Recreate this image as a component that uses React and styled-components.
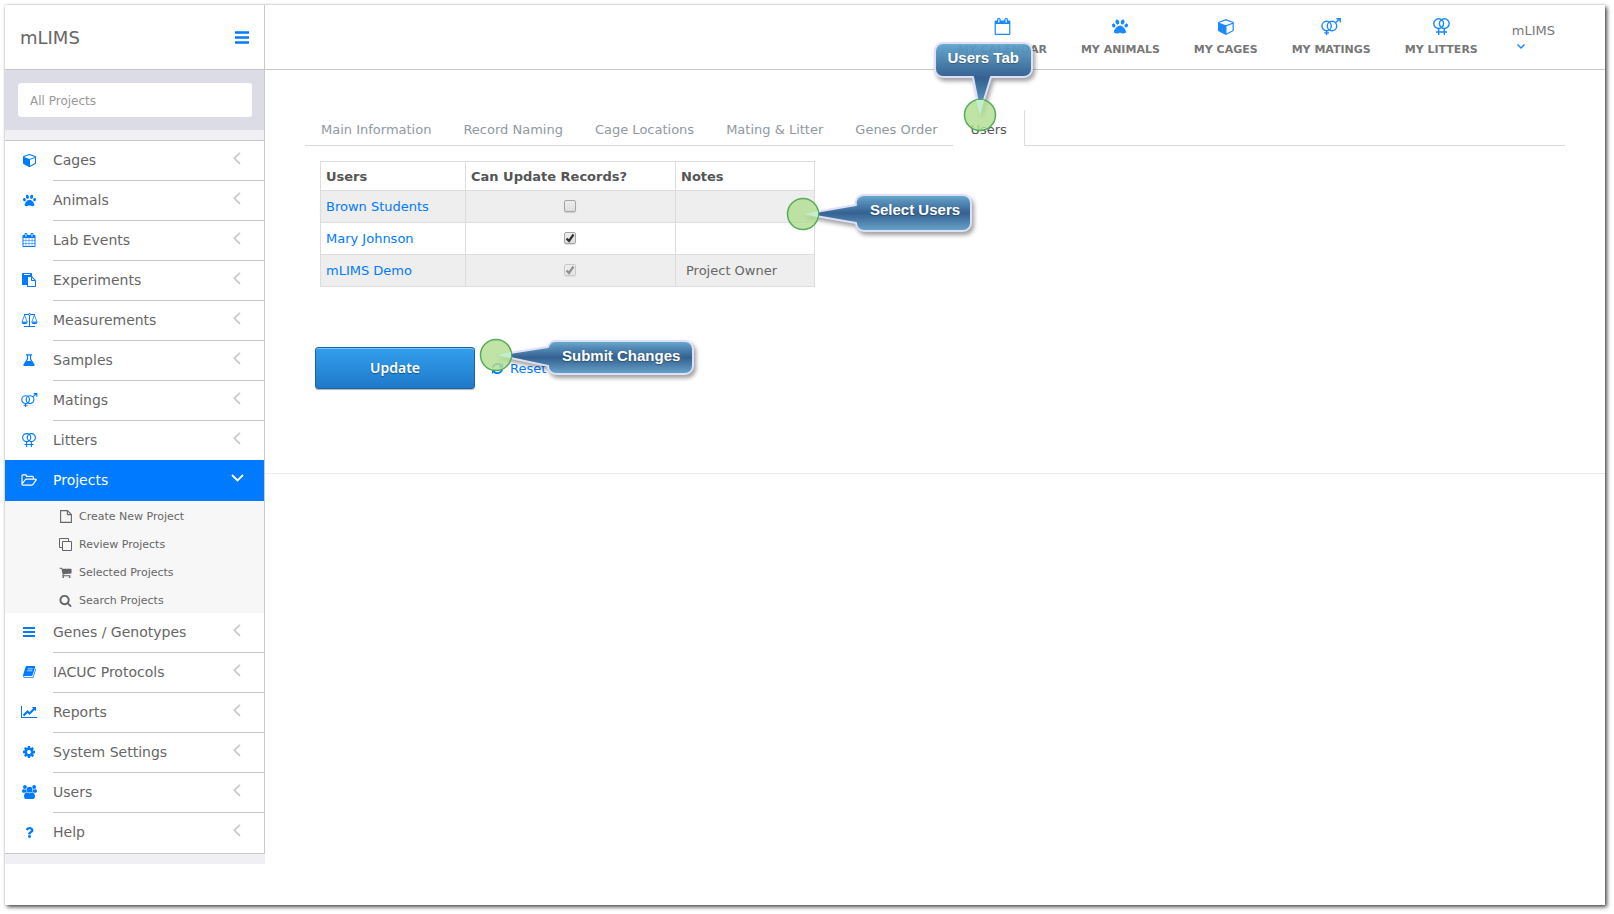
import React, { useState } from 'react';
import styled, { createGlobalStyle } from 'styled-components';
import { FaPaw, FaQuestion } from 'react-icons/fa';

const GlobalStyle = createGlobalStyle`
  * { box-sizing: border-box; }
  body {
    margin: 0;
    background: #fff;
    color: #666;
    font-family: "DejaVu Sans", Verdana, sans-serif;
    font-size: 13px;
  }
  a { color: inherit; text-decoration: none; }
  ul { list-style: none; margin: 0; padding: 0; }
`;

/* ---------- icons ---------- */

const Svg = styled.svg`
  display: block;
  flex: none;
  overflow: visible;
`;

const Glyph = ({ d, w = 1792, size = 14 }) => (
  <Svg width={(w * size) / 1792} height={size} viewBox={`0 0 ${w} 1792`} fill="currentColor" aria-hidden="true">
    <path d={d} />
  </Svg>
);

const Line = ({ w, h, size = h, sw = 1, children }) => (
  <Svg width={(w * size) / h} height={size} viewBox={`0 0 ${w} ${h}`} fill="none" stroke="currentColor" strokeWidth={sw} aria-hidden="true">
    {children}
  </Svg>
);

const CUBE = 'M896 1629l640-349v-636l-640 233v752zm-64-865l698-254-698-254-698 254 698 254zm832-252v768q0 35-18 65t-49 47l-704 384q-28 16-61 16t-61-16l-704-384q-31-17-49-47t-18-65v-768q0-40 23-73t61-47l704-256q22-8 44-8t44 8l704 256q38 14 61 47t23 73z';
const CALENDAR = 'M192 1664h288v-288h-288v288zm352 0h320v-288h-320v288zm-352-352h288v-320h-288v320zm352 0h320v-320h-320v320zm-352-384h288v-288h-288v288zm736 736h320v-288h-320v288zm-384-736h320v-288h-320v288zm768 736h288v-288h-288v288zm-384-352h320v-320h-320v320zm-352-864v-288q0-13-9.5-22.5t-22.5-9.5h-64q-13 0-22.5 9.5t-9.5 22.5v288q0 13 9.5 22.5t22.5 9.5h64q13 0 22.5-9.5t9.5-22.5zm736 864h288v-320h-288v320zm-384-384h320v-288h-320v288zm384 0h288v-288h-288v288zm32-480v-288q0-13-9.5-22.5t-22.5-9.5h-64q-13 0-22.5 9.5t-9.5 22.5v288q0 13 9.5 22.5t22.5 9.5h64q13 0 22.5-9.5t9.5-22.5zm384-64v1280q0 52-38 90t-90 38h-1408q-52 0-90-38t-38-90v-1280q0-52 38-90t90-38h128v-96q0-66 47-113t113-47h64q66 0 113 47t47 113v96h384v-96q0-66 47-113t113-47h64q66 0 113 47t47 113v96h128q52 0 90 38t38 90z';
const CALENDAR_O = 'M192 1664h1408v-1024h-1408v1024zm384-1216v-288q0-13-9.5-22.5t-22.5-9.5h-64q-13 0-22.5 9.5t-9.5 22.5v288q0 13 9.5 22.5t22.5 9.5h64q13 0 22.5-9.5t9.5-22.5zm768 0v-288q0-13-9.5-22.5t-22.5-9.5h-64q-13 0-22.5 9.5t-9.5 22.5v288q0 13 9.5 22.5t22.5 9.5h64q13 0 22.5-9.5t9.5-22.5zm384-64v1280q0 52-38 90t-90 38h-1408q-52 0-90-38t-38-90v-1280q0-52 38-90t90-38h128v-96q0-66 47-113t113-47h64q66 0 113 47t47 113v96h384v-96q0-66 47-113t113-47h64q66 0 113 47t47 113v96h128q52 0 90 38t38 90z';
const PASTE = 'M768 1664h896v-640h-416q-40 0-68-28t-28-68v-416h-384v1152zm256-1440v-64q0-13-9.5-22.5t-22.5-9.5h-704q-13 0-22.5 9.5t-9.5 22.5v64q0 13 9.5 22.5t22.5 9.5h704q13 0 22.5-9.5t9.5-22.5zm256 672h299l-299-299v299zm512 128v672q0 40-28 68t-68 28h-960q-40 0-68-28t-28-68v-160h-544q-40 0-68-28t-28-68v-1344q0-40 28-68t68-28h1088q40 0 68 28t28 68v328q21 13 36 28l408 408q28 28 48 76t20 88z';
const COG = 'M1152 896q0-106-75-181t-181-75-181 75-75 181 75 181 181 75 181-75 75-181zm512-109v222q0 12-8 23t-20 13l-185 28q-19 54-39 91 35 50 107 138 10 12 10 25t-9 23q-27 37-99 108t-94 71q-12 0-26-9l-138-108q-44 23-91 38-16 136-29 186-7 28-36 28h-222q-14 0-24.5-8.5t-11.5-21.5l-28-184q-49-16-90-37l-141 107q-10 9-25 9-14 0-25-11-126-114-165-168-7-10-7-23 0-12 8-23 15-21 51-66.5t54-70.5q-27-50-41-99l-183-27q-13-2-21-12.5t-8-23.5v-222q0-12 8-23t19-13l186-28q14-46 39-92-40-57-107-138-10-12-10-24 0-10 9-23 26-36 98.5-107.5t94.5-71.5q13 0 26 10l138 107q44-23 91-38 16-136 29-186 7-28 36-28h222q14 0 24.5 8.5t11.5 21.5l28 184q49 16 90 37l142-107q9-9 24-9 13 0 25 10 129 119 165 170 7 8 7 22 0 12-8 23-15 21-51 66.5t-54 70.5q26 50 41 98l183 28q13 2 21 12.5t8 23.5z';
const REFRESH = 'M1639 1056q0 5-1 7-64 268-268 434.5t-478 166.5q-146 0-282.5-55t-243.5-157l-129 129q-19 19-45 19t-45-19-19-45v-448q0-26 19-45t45-19h448q26 0 45 19t19 45-19 45l-137 137q71 66 161 102t187 36q134 0 250-65t186-179q11-17 53-117 8-23 30-23h192q13 0 22.5 9.5t9.5 22.5zm25-800v448q0 26-19 45t-45 19h-448q-26 0-45-19t-19-45 19-45l138-138q-148-137-349-137-134 0-250 65t-186 179q-11 17-53 117-8 23-30 23h-199q-13 0-22.5-9.5t-9.5-22.5v-7q65-268 270-434.5t480-166.5q146 0 284 55.5t245 156.5l130-129q19-19 45-19t45 19 19 45z';
const SEARCH = 'M1216 832q0-185-131.5-316.5t-316.5-131.5-316.5 131.5-131.5 316.5 131.5 316.5 316.5 131.5 316.5-131.5 131.5-316.5zm512 832q0 52-38 90t-90 38q-54 0-90-38l-343-342q-179 124-399 124-143 0-273.5-55.5t-225-150-150-225-55.5-273.5 55.5-273.5 150-225 225-150 273.5-55.5 273.5 55.5 225 150 150 225 55.5 273.5q0 220-124 399l343 343q37 37 37 90z';
const CART = 'M704 1536q0 52-38 90t-90 38-90-38-38-90 38-90 90-38 90 38 38 90zm896 0q0 52-38 90t-90 38-90-38-38-90 38-90 90-38 90 38 38 90zm128-1088v512q0 24-16.5 42.5t-40.5 21.5l-1044 122q13 60 13 70 0 16-24 64h920q26 0 45 19t19 45-19 45-45 19h-1024q-26 0-45-19t-19-45q0-11 8-31.5t16-36 21.5-40 15.5-29.5l-177-823h-204q-26 0-45-19t-19-45 19-45 45-19h256q16 0 28.5 6.5t19.5 15.5 13 24.5 8 26 5.5 29.5 4.5 26h1201q26 0 45 19t19 45z';
const CHART = 'M2048 1536v128h-2048v-1536h128v1408h1920zm-128-1248v435q0 21-19.5 29.5t-35.5-7.5l-121-121-633 633q-10 10-23 10t-23-10l-233-233-416 416-192-192 585-585q10-10 23-10t23 10l233 233 464-464-121-121q-16-16-7.5-35.5t29.5-19.5h435q14 0 23 9t9 23z';

const VenusMars = ({ size }) => (
  <Line w={20} h={17} size={size} sw={1.4}>
    <circle cx="5.6" cy="8" r="4.7" />
    <circle cx="11" cy="8" r="4.7" />
    <path d="M14.3 4.7L19 .8M15.4.7h3.8v3.8M5.6 12.7V17M3.2 14.9H8" />
  </Line>
);

const VenusDouble = ({ size }) => (
  <Line w={17} h={17} size={size} sw={1.4}>
    <circle cx="5.7" cy="5.6" r="4.9" />
    <circle cx="11.3" cy="5.6" r="4.9" />
    <path d="M5.7 10.5V17M11.3 10.5V17M3 14h11" />
  </Line>
);

const Scale = () => (
  <Line w={17} h={14} sw={1}>
    <path d="M3 1.5h11M8.5 1v12M3 13.5h11" />
    <path d="M3.6 2L1 9h5.2zM13.4 2l-2.6 7H16z" strokeWidth=".8" />
    <path d="M.3 9.2h6.4q-.5 2-3.2 2T.3 9.2zM10.3 9.2h6.4q-.5 2-3.2 2t-3.2-2z" fill="currentColor" stroke="none" />
    <circle cx="8.5" cy="1.5" r="1" fill="#fff" />
  </Line>
);

const Flask = () => (
  <Line w={12} h={12} sw={1.2}>
    <path d="M3 .8h6M4.5 1v4L1 10.7q-.3.8.5.8h9q.8 0 .5-.8L7.5 5V1" />
    <path d="M3.4 7h5.2l2.800 4.700H.6z" fill="currentColor" stroke="none" />
  </Line>
);

const FolderOpen = () => (
  <Line w={16} h={12} sw={1.2}>
    <path d="M1 9.600V1.900q0-1 1-1h2.600q1 0 1 1v.5h5.800q1 0 1 1v1.800M1 10l3-4q.5-.8 1.500-.8h9q1.200 0 .5 1l-2.700 4q-.6.900-1.600.9H1.900Q1 11.100 1 10z" />
  </Line>
);

const FileOutline = () => (
  <Line w={12} h={13} sw={1.1}>
    <path d="M.6.6h6.8l4 4v7.8H.6zM7.4.6v4h4" />
  </Line>
);

const Clone = () => (
  <Line w={13} h={13} sw={1}>
    <path d="M3.5 3.5h9v9h-9zM3.5 9.5h-3v-9h9v3" />
  </Line>
);

const Bars = ({ size = 12, w = 12 }) => (
  <Svg width={w} height={size} viewBox="0 0 12 12" preserveAspectRatio="none" fill="currentColor" aria-hidden="true">
    <path d="M0 1h12v2H0zM0 5h12v2H0zM0 9h12v2H0z" />
  </Svg>
);

const Book = () => (
  <Svg width="13" height="12" viewBox="0 0 13 12" fill="currentColor" aria-hidden="true">
    <path fillRule="evenodd" d="M4 0h7.300q1.100.1.800 1.200L9.600 9q-.4 1-1.400 1H1.800q-.8.200-.6.700t1.300.5H9q.8 0 1-.8l2.400-7.700q.7.400.5 1.100l-2.300 7.200q-.3 1-1.400 1H2Q.400 11.900.100 10.300q-.2-.8.100-1.600L2.400 1.300Q2.800 0 4 0zm.9 2.400l-.2.800h5l.2-.8zm-.6 2l-.2.800h5l.2-.8z" />
  </Svg>
);

const Group = () => (
  <Svg width="15" height="14" viewBox="0 0 15 14" fill="currentColor" aria-hidden="true">
    <circle cx="7.5" cy="4.700" r="2.900" />
    <circle cx="2.900" cy="2" r="1.900" />
    <circle cx="12.100" cy="2" r="1.900" />
    <path d="M4.700 7.200q2.800 2 5.600 0 2.500.3 2.700 4.300 0 2.500-2 2.500H4q-2 0-2-2.500.2-4 2.700-4.300z" />
    <path d="M1.200 3.900q1.400.9 2.700.4.200 1.600 1 2.400-1.300.1-2.100 1H1.200Q0 7.700 0 6.600q.1-2.300 1.200-2.700zM13.800 3.900q-1.400.9-2.700.4-.2 1.600-1 2.400 1.300.1 2.100 1h1.600q1.200 0 1.200-1.100-.1-2.300-1.200-2.700z" />
  </Svg>
);

const Chevron = ({ open }) => (
  <Svg width="13" height="13" viewBox="0 0 13 13" fill="none" stroke={open ? '#fff' : '#c7c7cc'} strokeWidth={open ? 1.8 : 1.6} aria-hidden="true">
    <path d={open ? 'M1 3l5.500 5.500L12 3' : 'M9 .8L3.300 6.300 9 11.800'} />
  </Svg>
);

/* ---------- layout ---------- */

const Page = styled.div`
  display: flex;
  min-height: calc(100vh - 14px);
  margin: 5px 9px 9px 5px;
  background: #fff;
  box-shadow: 2px 2px 4px rgba(0, 0, 0, .7), 0 0 2px rgba(0, 0, 0, .2);
`;

const Sidebar = styled.aside`
  flex: none;
  align-self: flex-start;
  width: 260px;
  padding-bottom: 10px;
  background: #efeff4;
`;

const Brand = styled.div`
  display: flex;
  align-items: center;
  justify-content: space-between;
  height: 65px;
  padding: 0 15px;
  background: #fff;
  border-bottom: 1px solid #c8c7cc;
  border-right: 1px solid #c8c7cc;
  font-size: 18px;
`;

const MenuButton = styled.button`
  padding: 0;
  border: 0;
  background: none;
  color: #007aff;
`;

const FilterArea = styled.div`
  padding-bottom: 10px;
  border-right: 1px solid #c8c7cc;
`;

const Filter = styled.div`
  padding: 13px 12px 13px 13px;
  background: #dcdce6;
`;

const FilterInput = styled.input`
  display: block;
  width: 100%;
  height: 34px;
  padding: 1px 12px 0;
  border: 0;
  border-radius: 3px;
  background: #fff;
  font: 12px "DejaVu Sans", Verdana, sans-serif;
  color: #666;
  &::placeholder { color: #999; opacity: 1; }
`;

const Menu = styled.nav`
  background: #fff;
  border: 1px solid #c8c7cc;
  border-left: 0;
`;

const MenuLink = styled.a`
  display: flex;
  height: ${p => (p.$active ? 41 : p.$last ? 39 : 40)}px;
  background: ${p => (p.$active ? '#007aff' : 'transparent')};
  color: ${p => (p.$active ? '#fff' : '#666')};
  font-size: 14px;
`;

const MenuIcon = styled.span`
  display: flex;
  flex: none;
  align-items: center;
  justify-content: center;
  width: 48px;
  padding-bottom: 2px;
  color: ${p => (p.$active ? '#fff' : '#007aff')};
`;

const MenuText = styled.span`
  display: flex;
  flex: 1;
  align-items: center;
  justify-content: space-between;
  padding: 0 20px 2px 0;
  border-bottom: ${p => (p.$line ? '1px solid #c8c7cc' : '0')};

  svg { margin-bottom: 3px; }
`;

const SubMenu = styled.ul`
  background: #f7f7f7;
`;

const SubLink = styled.a`
  display: flex;
  align-items: center;
  gap: 7px;
  height: 28px;
  padding: 2px 0 0 54px;
  font-size: 11px;
`;

const SubIcon = styled.span`
  display: flex;
  justify-content: center;
  width: 13px;
`;

const Main = styled.div`
  flex: 1;
  min-width: 0;
`;

const TopBar = styled.header`
  display: flex;
  justify-content: flex-end;
  height: 65px;
  padding-right: 50px;
  border-bottom: 1px solid #c8c7cc;
`;

const Shortcut = styled.a`
  display: flex;
  flex-direction: column;
  align-items: center;
  gap: 8px;
  margin-right: 34px;
  padding-top: 13px;
  color: #777;
  font-size: 11px;
  font-weight: bold;
  line-height: 14px;
  white-space: nowrap;

  svg { color: #1a88ff; height: 17px; }
`;

const Account = styled.button`
  display: flex;
  flex-direction: column;
  align-items: flex-start;
  gap: 5px;
  padding: 18px 0 0;
  border: 0;
  background: none;
  color: #777;
  font: 13px/16px "DejaVu Sans", Verdana, sans-serif;

  svg { margin-left: 5px; color: #1a88ff; }
`;

const Section = styled.section`
  padding: 40px 40px 84px;
  border-bottom: 1px solid #ebebeb;
`;

const Tabs = styled.ul`
  display: flex;
  height: 36px;
  border-bottom: 1px solid #d9d9d9;
`;

const TabItem = styled.li`
  position: relative;
  height: 36px;
  background: ${p => (p.$active ? '#fff' : 'transparent')};
  border-right: 1px solid ${p => (p.$active ? '#ddd' : 'transparent')};
`;

const TabLink = styled.a`
  display: block;
  padding: ${p => (p.$active ? '12px 17px 0' : '12px 15px 0 16px')};
  color: ${p => (p.$active ? '#555' : '#8e999f')};
  line-height: 16px;
  white-space: nowrap;
`;

const TableWrap = styled.div`
  position: relative;
  width: 495px;
  margin: 15px 0 60px 15px;
`;

const Table = styled.table`
  width: 100%;
  border-collapse: collapse;
  table-layout: fixed;

  th, td {
    border: 1px solid #ddd;
    padding: 0 5px;
    text-align: left;
  }
  th { height: 29px; color: #555; }
  td { height: 32px; }
  td:nth-child(2) { padding: 0 7px 2px 5px; }
  td:nth-child(3) { padding-left: 10px; }
  tbody tr:nth-child(odd) { background: #eee; }
  td a { color: #007aff; }
`;

const Check = styled.input`
  appearance: none;
  display: block;
  width: 12px;
  height: 12px;
  margin: 0 auto;
  border: 1px solid #a5a5a5;
  border-radius: 2px;
  background: linear-gradient(#ededed, #dedede);
  box-shadow: 0 1px 1px rgba(0, 0, 0, .12);

  &:checked {
    background: url("data:image/svg+xml,%3Csvg xmlns='http://www.w3.org/2000/svg' viewBox='0 0 10 10'%3E%3Cpath d='M1.5 5.5L4 8 8.5 1.5' fill='none' stroke='%23333' stroke-width='2.2'/%3E%3C/svg%3E"), linear-gradient(#ededed, #dedede);
  }
  &:disabled { opacity: .5; }
`;

const Actions = styled.div`
  position: relative;
  display: flex;
  align-items: center;
  gap: 16px;
  margin-left: 10px;
`;

const UpdateButton = styled.button`
  width: 160px;
  height: 42px;
  padding: 0 0 2px;
  border: 1px solid #1a65a5;
  border-radius: 3px;
  background: linear-gradient(#329fec, #2079cb);
  box-shadow: inset 0 1px 0 #7cc3f5, 0 1px 1px rgba(0, 0, 0, .3);
  color: #fff;
  font: 600 14px "Noto Sans", sans-serif;
  text-shadow: 0 1px 1px rgba(0, 0, 0, .4);
`;

const ResetLink = styled.a`
  display: flex;
  align-items: center;
  gap: 6px;
  color: #007aff;
`;

/* ---------- callouts ---------- */

const CalloutBox = styled.div`
  position: absolute;
  z-index: 2;
  left: ${p => p.$left}px;
  top: ${p => p.$top}px;
  display: grid;
  pointer-events: none;

  > * { grid-area: 1 / 1; }
`;

const CalloutText = styled.span`
  position: relative;
  padding: ${p => p.$pad};
  color: #fff;
  font: bold 15px/18px "Liberation Sans", Arial, sans-serif;
  white-space: nowrap;
  text-shadow: 0 1px 1px rgba(0, 0, 0, .3);
`;

const Bubble = styled.svg`
  display: block;
  overflow: visible;
`;

const BubblePath = styled.path`
  stroke: #dedff8;
  stroke-width: 2;
  stroke-linejoin: round;
  filter: drop-shadow(2px 3px 2px rgba(0, 0, 0, .4));
`;

const Target = styled.circle`
  fill: rgba(178, 222, 146, .82);
  stroke: #56ab5b;
  stroke-width: 1.5;
`;

const stops = [
  ['0', '#63a8d2'],
  ['.5', '#2b5b8f'],
  ['1', '#63a5cf'],
];

function Callout({ id, left, top, w, h, shape, cx, cy, tip, pad, children }) {
  return (
    <CalloutBox $left={left} $top={top}>
      <Bubble width={w} height={h} aria-hidden="true">
        <defs>
          <linearGradient id={id} x1="0" y1="0" x2="0" y2="1">
            {stops.map(([offset, color]) => <stop key={offset} offset={offset} stopColor={color} />)}
          </linearGradient>
        </defs>
        <BubblePath d={shape} fill={`url(#${id})`} fillOpacity=".92" />
        <Target cx={cx} cy={cy} r="15.5" />
        <path d={tip} fill="#c4edcf" />
      </Bubble>
      <CalloutText $pad={pad}>{children}</CalloutText>
    </CalloutBox>
  );
}

/* ---------- data ---------- */

const menuTop = [
  ['Cages', <Glyph d={CUBE} w={1664} />],
  ['Animals', <FaPaw size={13} />],
  ['Lab Events', <Glyph d={CALENDAR} />],
  ['Experiments', <Glyph d={PASTE} />],
  ['Measurements', <Scale />],
  ['Samples', <Flask />],
  ['Matings', <VenusMars size={14} />],
  ['Litters', <VenusDouble size={14} />],
];

const subMenu = [
  ['Create New Project', <FileOutline />],
  ['Review Projects', <Clone />],
  ['Selected Projects', <Glyph d={CART} size={13} />],
  ['Search Projects', <Glyph d={SEARCH} size={13} w={1664} />],
];

const menuBottom = [
  ['Genes / Genotypes', <Bars />],
  ['IACUC Protocols', <Book />],
  ['Reports', <Glyph d={CHART} w={2048} />],
  ['System Settings', <Glyph d={COG} />],
  ['Users', <Group />],
  ['Help', <FaQuestion size={11} />],
];

const shortcuts = [
  ['MY CALENDAR', <Glyph d={CALENDAR_O} size={17} />],
  ['MY ANIMALS', <FaPaw size={16} />],
  ['MY CAGES', <Glyph d={CUBE} w={1664} size={17} />],
  ['MY MATINGS', <VenusMars size={17} />],
  ['MY LITTERS', <VenusDouble size={17} />],
];

const tabs = ['Main Information', 'Record Naming', 'Cage Locations', 'Mating & Litter', 'Genes Order', 'Users'];

const users = [
  { name: 'Brown Students', canUpdate: false, notes: '' },
  { name: 'Mary Johnson', canUpdate: true, notes: '' },
  { name: 'mLIMS Demo', canUpdate: true, notes: 'Project Owner', owner: true },
];

const MenuRow = ({ label, icon, active, line, last }) => (
  <MenuLink href="#" $active={active} $last={last}>
    <MenuIcon $active={active}>{icon}</MenuIcon>
    <MenuText $line={line}>
      {label}
      <Chevron open={active} />
    </MenuText>
  </MenuLink>
);

const App = () => {
  const [checked, setChecked] = useState(users.map(u => u.canUpdate));

  const toggle = index => {
    setChecked(checked.map((value, i) => (i === index ? !value : value)));
  };

  return (
    <React.Fragment>
      <GlobalStyle />
      <Page>
        <Sidebar>
          <Brand>
            mLIMS
            <MenuButton aria-label="Toggle menu"><Bars w={14} size={15} /></MenuButton>
          </Brand>
          <FilterArea>
            <Filter>
              <FilterInput type="text" placeholder="All Projects" aria-label="All Projects" />
            </Filter>
          </FilterArea>
          <Menu>
            {menuTop.map(([label, icon], i) => (
              <MenuRow key={label} label={label} icon={icon} line={i < menuTop.length - 1} last={i === menuTop.length - 1} />
            ))}
            <MenuRow label="Projects" icon={<FolderOpen />} active />
            <SubMenu>
              {subMenu.map(([label, icon]) => (
                <li key={label}>
                  <SubLink href="#"><SubIcon>{icon}</SubIcon>{label}</SubLink>
                </li>
              ))}
            </SubMenu>
            {menuBottom.map(([label, icon], i) => (
              <MenuRow key={label} label={label} icon={icon} line={i < menuBottom.length - 1} />
            ))}
          </Menu>
        </Sidebar>

        <Main>
          <TopBar>
            {shortcuts.map(([label, icon]) => (
              <Shortcut href="#" key={label}>{icon}{label}</Shortcut>
            ))}
            <Account>
              mLIMS
              <Line w={8} h={5} sw={1.5}><path d="M.5.5L4 4 7.5.5" /></Line>
            </Account>
          </TopBar>

          <Section>
            <Tabs>
              {tabs.map(tab => (
                <TabItem key={tab} $active={tab === 'Users'}>
                  <TabLink href="#" $active={tab === 'Users'}>{tab}</TabLink>
                  {tab === 'Users' && (
                    <Callout
                      id="tabFill" left={-19} top={-68} w={100} h={89}
                      shape="M9 1H90a8 8 0 0 1 8 8V27a8 8 0 0 1-8 8H57L46 71 39 35H9a8 8 0 0 1-8-8V9a8 8 0 0 1 8-8z"
                      cx={46} cy={73} tip="M42 58L50 58 46 73z" pad="7px 13px"
                    >
                      Users Tab
                    </Callout>
                  )}
                </TabItem>
              ))}
            </Tabs>

            <TableWrap>
              <Table>
                <colgroup>
                  <col width="145" />
                  <col width="210" />
                  <col width="139" />
                </colgroup>
                <thead>
                  <tr>
                    <th>Users</th>
                    <th>Can Update Records?</th>
                    <th>Notes</th>
                  </tr>
                </thead>
                <tbody>
                  {users.map((user, i) => (
                    <tr key={user.name}>
                      <td><a href="#">{user.name}</a></td>
                      <td>
                        <Check
                          type="checkbox"
                          aria-label={`${user.name} can update records`}
                          checked={checked[i]}
                          disabled={user.owner}
                          onChange={() => toggle(i)}
                        />
                      </td>
                      <td>{user.notes}</td>
                    </tr>
                  ))}
                </tbody>
              </Table>
              <Callout
                id="usersFill" left={467} top={34} w={186} h={38}
                shape="M77 0H176a8 8 0 0 1 8 8V28a8 8 0 0 1-8 8H77a8 8 0 0 1-8-8L17 19 69 10a8 8 0 0 1 8-10z"
                cx={16} cy={19} tip="M17 19L31 16V22z" pad="6px 0 0 83px"
              >
                Select Users
              </Callout>
            </TableWrap>

            <Actions>
              <UpdateButton type="submit">Update</UpdateButton>
              <ResetLink href="#"><Glyph d={REFRESH} size={13} />Reset</ResetLink>
              <Callout
                id="submitFill" left={165} top={-7} w={215} h={36}
                shape="M76 1H205a8 8 0 0 1 8 8V26a8 8 0 0 1-8 8H76a8 8 0 0 1-8-8L17 15 68 7a8 8 0 0 1 8-6z"
                cx={16} cy={15} tip="M17 15L31 12V18z" pad="7px 0 0 82px"
              >
                Submit Changes
              </Callout>
            </Actions>
          </Section>
        </Main>
      </Page>
    </React.Fragment>
  );
};

export default App;
